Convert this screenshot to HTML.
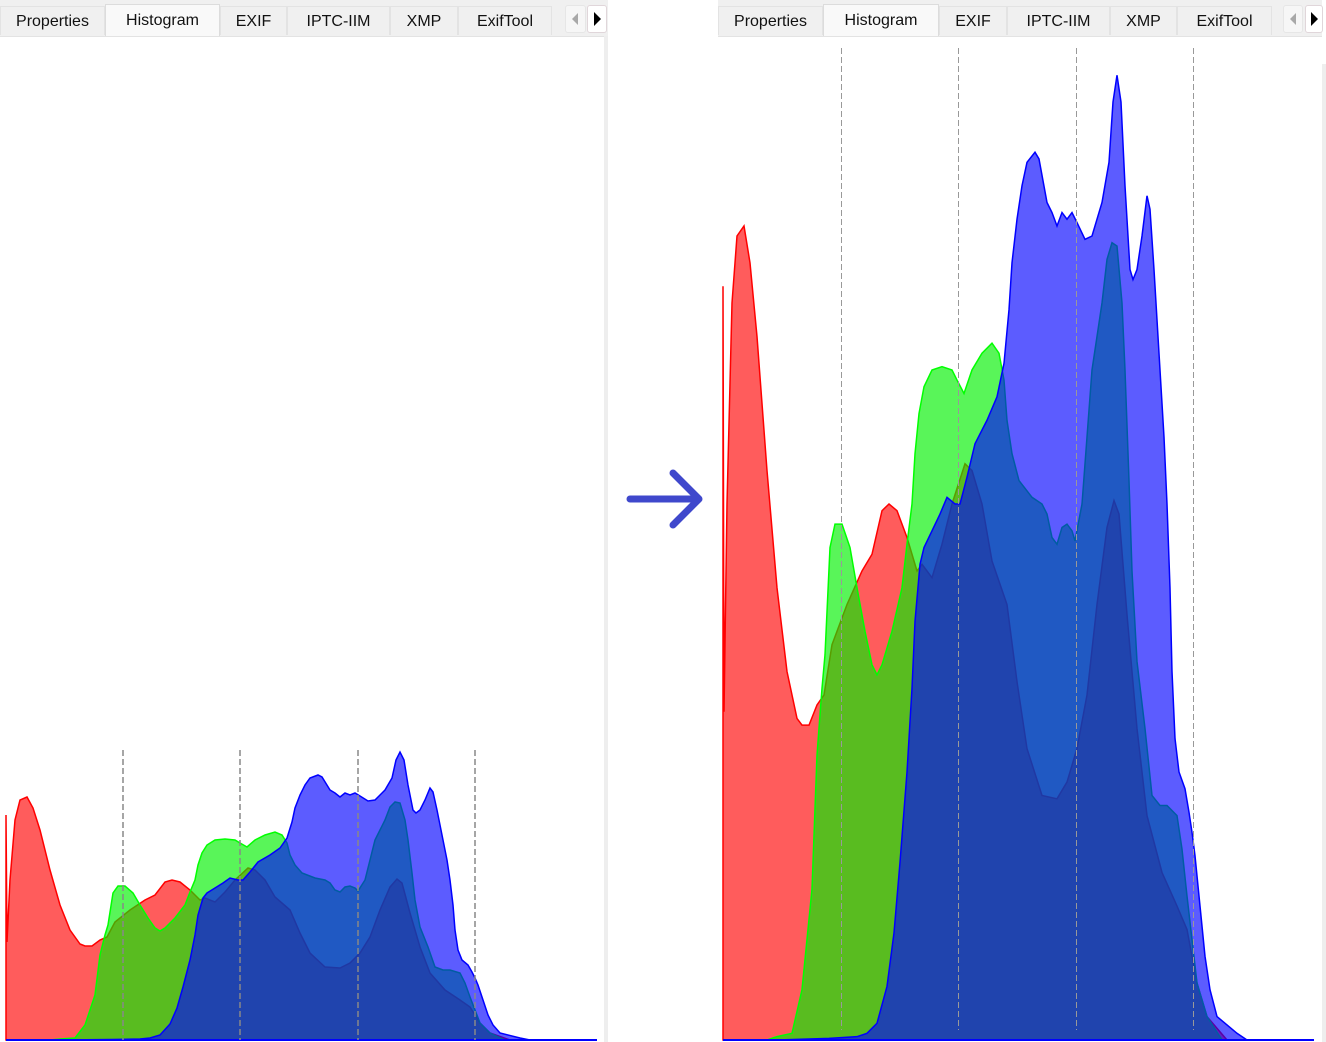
<!DOCTYPE html>
<html><head><meta charset="utf-8"><style>
html,body{margin:0;padding:0;background:#fff;width:1326px;height:1042px;overflow:hidden;position:relative;font-family:"Liberation Sans",sans-serif;}
.bar{position:absolute;top:0;height:36px;background:#f0f0f0;border-bottom:1px solid #e3e3e3;}
.tab{position:absolute;top:6px;height:29px;box-sizing:border-box;border:1px solid #e3e3e3;border-bottom:none;background:#f0f0f0;font-size:16px;color:#111;text-align:center;line-height:29px;}
.tab.sel{top:4px;height:32px;background:#f9f9f9;border-color:#dcdcdc;line-height:31px;}
.btn{position:absolute;top:5px;height:28px;box-sizing:border-box;border:1px solid #e6e6e6;border-radius:3px;background:#f6f6f6;}
.btn.on{background:#fff;border-color:#e0d6da;}
.vl{position:absolute;background:#eeeeee;}
</style></head><body>
<div class="bar" style="left:0;width:608px"></div>
<div class="tab" style="left:0;width:105px">Properties</div>
<div class="tab sel" style="left:105px;width:115px">Histogram</div>
<div class="tab" style="left:220px;width:67px">EXIF</div>
<div class="tab" style="left:287px;width:103px">IPTC-IIM</div>
<div class="tab" style="left:390px;width:68px">XMP</div>
<div class="tab" style="left:458px;width:94px">ExifTool</div>
<div class="btn" style="left:565px;width:21px"><svg width="19" height="26"><path d="M12 7 L6 13 L12 19Z" fill="#a8a8a8"/></svg></div>
<div class="btn on" style="left:587px;width:20px"><svg width="18" height="26"><path d="M6 6 L13 13 L6 20Z" fill="#000"/></svg></div>
<div class="vl" style="left:604px;top:36px;width:4px;height:1006px"></div>

<div class="bar" style="left:718px;width:604px"></div>
<div class="tab" style="left:718px;width:105px">Properties</div>
<div class="tab sel" style="left:823px;width:116px">Histogram</div>
<div class="tab" style="left:939px;width:68px">EXIF</div>
<div class="tab" style="left:1007px;width:103px">IPTC-IIM</div>
<div class="tab" style="left:1110px;width:67px">XMP</div>
<div class="tab" style="left:1177px;width:95px">ExifTool</div>
<div class="btn" style="left:1283px;width:20px"><svg width="18" height="26"><path d="M12 7 L6 13 L12 19Z" fill="#a8a8a8"/></svg></div>
<div class="btn on" style="left:1305px;width:18px"><svg width="16" height="26"><path d="M5 6 L12 13 L5 20Z" fill="#000"/></svg></div>
<div class="vl" style="left:1322px;top:64px;width:4px;height:978px"></div>

<svg width="1326" height="1042" style="position:absolute;left:0;top:0">
<defs>
<g id="hist">
<path d="M6 1040 L6 815 L7 942 L10 880 L15 820 L20 800 L27 797 L33 808 L40 830 L50 870 L60 905 L70 930 L80 944 L85 946 L92 946 L100 940 L107 937 L115 922 L130 910 L145 900 L155 895 L165 882 L172 880 L180 882 L190 890 L200 900 L205 898 L215 902 L225 892 L235 880 L248 868 L255 870 L265 880 L275 897 L290 910 L300 933 L310 953 L325 967 L340 968 L350 963 L360 953 L370 937 L380 910 L390 887 L397 879 L402 883 L410 913 L420 947 L430 973 L445 990 L460 1000 L470 1007 L480 1023 L490 1033 L510 1040 Z" fill="#ff0000" fill-opacity="0.64" stroke="#ff0000" stroke-width="1.5" vector-effect="non-scaling-stroke"/>
<path d="M50 1040 L60 1039 L75 1038 L85 1025 L95 995 L100 955 L105 935 L108 925 L113 893 L118 886 L125 886 L133 893 L140 905 L148 918 L155 928 L160 931 L165 928 L175 918 L185 905 L190 892 L195 880 L198 865 L202 853 L207 845 L215 840 L225 839 L235 840 L240 843 L247 847 L255 840 L265 835 L275 832 L282 835 L287 843 L290 855 L295 865 L302 873 L315 878 L325 880 L330 883 L335 890 L340 892 L345 887 L350 886 L355 888 L358 891 L365 880 L370 860 L375 840 L380 830 L385 820 L390 807 L395 802 L400 803 L405 820 L408 840 L412 873 L415 900 L420 927 L428 947 L435 967 L443 970 L450 970 L460 973 L465 983 L470 997 L475 1010 L480 1023 L490 1033 L505 1040 Z" fill="#00f000" fill-opacity="0.65" stroke="#00ff00" stroke-width="1.5" vector-effect="non-scaling-stroke"/>
<path d="M60 1040 L112 1039.5 L140 1039 L150 1038 L160 1035 L170 1024 L177 1008 L183 987 L190 960 L195 935 L198 915 L203 898 L207 893 L215 888 L223 883 L230 878 L238 880 L243 880 L250 872 L258 862 L270 855 L280 848 L287 838 L292 822 L295 808 L300 795 L305 785 L310 778 L318 775 L322 777 L330 790 L335 793 L340 797 L345 793 L350 795 L355 793 L360 796 L368 801 L375 800 L385 790 L392 778 L396 760 L400 752 L404 760 L408 785 L413 810 L416 813 L420 810 L425 800 L430 788 L433 792 L437 810 L443 840 L447 860 L450 880 L453 905 L455 930 L458 950 L462 960 L468 965 L472 972 L475 978 L478 985 L483 1000 L488 1015 L493 1025 L500 1033 L520 1038 L530 1040 Z" fill="#0000ff" fill-opacity="0.64" stroke="#0000ff" stroke-width="1.5" vector-effect="non-scaling-stroke"/>
<line x1="6" y1="1040" x2="597" y2="1040" stroke="#0000ff" stroke-width="2" vector-effect="non-scaling-stroke"/>
</g>
</defs>
<use href="#hist"/>
<g stroke="#888" stroke-width="1.5" stroke-dasharray="6 3">
<line x1="123" y1="750" x2="123" y2="1040"/><line x1="240" y1="750" x2="240" y2="1040"/>
<line x1="358" y1="750" x2="358" y2="1040"/><line x1="475" y1="750" x2="475" y2="1040"/>
</g>
<g transform="translate(717,1040) scale(1,3.35) translate(0,-1040)"><use href="#hist"/></g>
<g stroke="#999" stroke-width="1" stroke-dasharray="6 3">
<line x1="841.5" y1="48" x2="841.5" y2="1030"/><line x1="958.5" y1="48" x2="958.5" y2="1030"/>
<line x1="1076.5" y1="48" x2="1076.5" y2="1030"/><line x1="1193.5" y1="48" x2="1193.5" y2="1030"/>
</g>
<g stroke="#3f48cc" stroke-width="7" stroke-linecap="round" stroke-linejoin="round" fill="none">
<path d="M630 499 L699 499 M673 473 L699 499 L673 525"/>
</g>
</svg>
</body></html>
